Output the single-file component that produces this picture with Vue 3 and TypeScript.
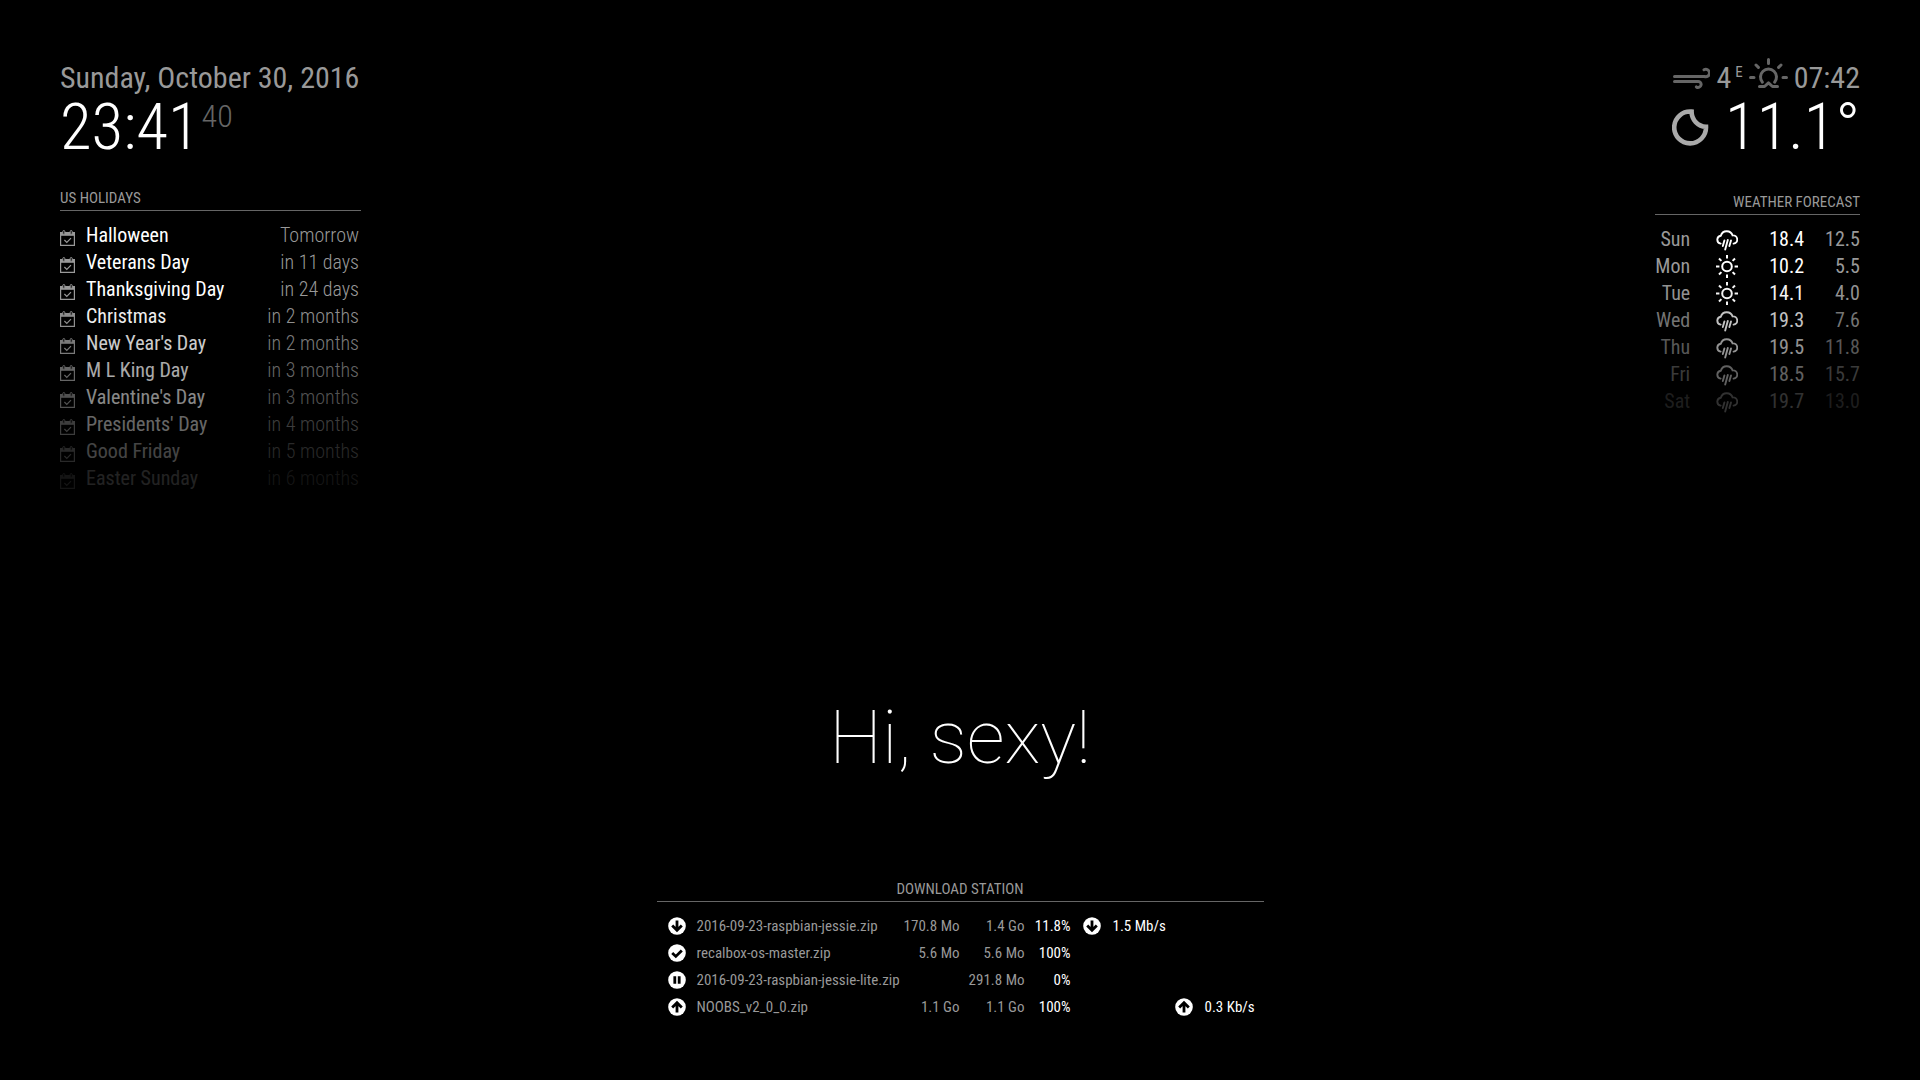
<script setup lang="ts">
interface Holiday { title: string; when: string }
interface Forecast { day: string; icon: 'rain' | 'sun'; high: string; low: string }
interface Task { name: string; status: IconName; done: string; size: string; percent: string; down?: string; up?: string }
type IconName = 'down' | 'up' | 'check' | 'pause'

const holidays: Holiday[] = [
  { title: 'Halloween', when: 'Tomorrow' },
  { title: 'Veterans Day', when: 'in 11 days' },
  { title: 'Thanksgiving Day', when: 'in 24 days' },
  { title: 'Christmas', when: 'in 2 months' },
  { title: "New Year's Day", when: 'in 2 months' },
  { title: 'M L King Day', when: 'in 3 months' },
  { title: "Valentine's Day", when: 'in 3 months' },
  { title: "Presidents' Day", when: 'in 4 months' },
  { title: 'Good Friday', when: 'in 5 months' },
  { title: 'Easter Sunday', when: 'in 6 months' },
]

const forecast: Forecast[] = [
  { day: 'Sun', icon: 'rain', high: '18.4', low: '12.5' },
  { day: 'Mon', icon: 'sun', high: '10.2', low: '5.5' },
  { day: 'Tue', icon: 'sun', high: '14.1', low: '4.0' },
  { day: 'Wed', icon: 'rain', high: '19.3', low: '7.6' },
  { day: 'Thu', icon: 'rain', high: '19.5', low: '11.8' },
  { day: 'Fri', icon: 'rain', high: '18.5', low: '15.7' },
  { day: 'Sat', icon: 'rain', high: '19.7', low: '13.0' },
]

const tasks: Task[] = [
  { name: '2016-09-23-raspbian-jessie.zip', status: 'down', done: '170.8 Mo', size: '1.4 Go', percent: '11.8%', down: '1.5 Mb/s' },
  { name: 'recalbox-os-master.zip', status: 'check', done: '5.6 Mo', size: '5.6 Mo', percent: '100%' },
  { name: '2016-09-23-raspbian-jessie-lite.zip', status: 'pause', done: '', size: '291.8 Mo', percent: '0%' },
  { name: 'NOOBS_v2_0_0.zip', status: 'up', done: '1.1 Go', size: '1.1 Go', percent: '100%', up: '0.3 Kb/s' },
]

const glyphs: Record<IconName, string> = {
  down: 'M9 3.6V13M4.2 8.4L9 13.2L13.8 8.4',
  up: 'M9 14.4V5M4.2 9.6L9 4.8L13.8 9.6',
  check: 'M4.2 9L7.8 12.4L13.8 6.4',
  pause: 'M6.8 5.2V12.8M11.2 5.2V12.8',
}

// Rows past the first quarter of a list fade out towards the bottom.
function fade(index: number, count: number): number {
  const start = count * 0.25
  return index < start ? 1 : 1 - (index - start) / (count - start)
}
</script>

<template>
  <main class="mirror">
    <div class="top">
      <div class="column left">
        <section class="module">
          <div class="medium date">Sunday, October 30, 2016</div>
          <div class="large clock">23:41<span class="seconds">40</span></div>
        </section>
        <section class="module">
          <h2 class="title">US Holidays</h2>
          <table class="list calendar">
            <tbody>
              <tr v-for="(h, i) in holidays" :key="h.title" :style="{ opacity: fade(i, holidays.length) }">
                <td class="symbol">
                  <svg width="15" height="16" viewBox="0 0 15 16" fill="none" stroke="currentColor">
                    <path d="M0.6 2.6H14.4V15.4H0.6Z" stroke-width="1.2" />
                    <path d="M0.5 2.4H14.5V5.8H0.5Z" fill="currentColor" stroke="none" />
                    <rect x="2.8" y="0.6" width="2" height="3.6" rx="0.8" fill="#000" />
                    <rect x="10.2" y="0.6" width="2" height="3.6" rx="0.8" fill="#000" />
                    <path d="M4.4 10L6.8 12.4L11 8.2" stroke-width="1.2" />
                  </svg>
                </td>
                <td class="event">{{ h.title }}</td>
                <td class="when">{{ h.when }}</td>
              </tr>
            </tbody>
          </table>
        </section>
      </div>

      <div class="column right">
        <section class="module weather">
          <div class="medium wind">
            <svg width="37" height="22" viewBox="0 0 37 22" fill="none" stroke="#666" stroke-width="3" stroke-linecap="round">
              <path d="M1.5 9.5H31.5A3.7 3.7 0 1 0 31 2.8" />
              <path d="M1.5 14.5H24.5A3 3 0 1 1 23.4 19.9" />
            </svg>
            <span class="speed">4<sup>E</sup></span>
            <svg width="39" height="31" viewBox="0 0 39 31" fill="none" stroke="#666" stroke-width="3" stroke-linecap="round">
              <path d="M19.5 1.5V5.5M7 7L9.4 9.4M32 7L29.6 9.4M1.5 19.5H5M34 19.5H37.5" />
              <path d="M13.4 24.2A8 8 0 1 1 25.6 24.2" />
              <path d="M10.5 28.5H15.5L19.5 24.8L23.5 28.5H28.5" stroke-linejoin="round" />
            </svg>
            <span>07:42</span>
          </div>
          <div class="large temp">
            <svg width="37" height="37" viewBox="0 0 37 37" fill="none" stroke="#aaa" stroke-width="4.6">
              <path d="M19.6 2.6A15.9 15.9 0 1 0 34 17.8A15 15 0 0 1 19.6 2.6Z" />
            </svg>
            <span>11.1°</span>
          </div>
        </section>
        <section class="module">
          <h2 class="title">Weather Forecast</h2>
          <table class="list forecast">
            <tbody>
              <tr v-for="(f, i) in forecast" :key="f.day" :style="{ opacity: fade(i, forecast.length) }">
                <td class="day">{{ f.day }}</td>
                <td class="sky">
                  <svg v-if="f.icon === 'sun'" width="22" height="23" viewBox="0 0 22 23" fill="none" stroke="currentColor" stroke-width="2">
                    <circle cx="11" cy="11.5" r="4.8" />
                    <path d="M11 0V3.6M11 19.4V23M0 11.5H3.4M18.6 11.5H22M3 3.5L5.4 5.9M16.6 17.1L19 19.5M19 3.5L16.6 5.9M5.4 17.1L3 19.5" />
                  </svg>
                  <svg v-else width="22" height="23" viewBox="0 0 22 23" fill="none" stroke="currentColor" stroke-width="1.9" stroke-linecap="round">
                    <path d="M4.6 15.6A4 4 0 0 1 4.8 7.7A6.2 6.2 0 0 1 16.6 7.4A4.1 4.1 0 0 1 17.6 15.6" />
                    <path d="M8.4 12.4L6.8 18M11.8 12L9.2 21.5M15 12.4L13.4 18" />
                  </svg>
                </td>
                <td class="high">{{ f.high }}</td>
                <td class="low">{{ f.low }}</td>
              </tr>
            </tbody>
          </table>
        </section>
      </div>
    </div>

    <div class="bottom">
      <p class="compliment">Hi, sexy!</p>
      <section class="downloads">
        <h2 class="title">Download Station</h2>
        <table class="list tasks">
          <tbody>
            <tr v-for="t in tasks" :key="t.name">
              <td class="state">
                <svg width="18" height="18" viewBox="0 0 18 18" fill="none" stroke="#000" stroke-width="2.8">
                  <circle cx="9" cy="9" r="8.8" fill="#fff" stroke="none" />
                  <path :d="glyphs[t.status]" />
                </svg>
              </td>
              <td class="name">{{ t.name }}</td>
              <td class="done">{{ t.done }}</td>
              <td class="size">{{ t.size }}</td>
              <td class="percent">{{ t.percent }}</td>
              <td class="rate">
                <span v-if="t.down" class="speed-rate">
                  <svg width="18" height="18" viewBox="0 0 18 18" fill="none" stroke="#000" stroke-width="2.8">
                    <circle cx="9" cy="9" r="8.8" fill="#fff" stroke="none" />
                    <path :d="glyphs.down" />
                  </svg>
                  {{ t.down }}
                </span>
              </td>
              <td class="rate">
                <span v-if="t.up" class="speed-rate">
                  <svg width="18" height="18" viewBox="0 0 18 18" fill="none" stroke="#000" stroke-width="2.8">
                    <circle cx="9" cy="9" r="8.8" fill="#fff" stroke="none" />
                    <path :d="glyphs.up" />
                  </svg>
                  {{ t.up }}
                </span>
              </td>
            </tr>
          </tbody>
        </table>
      </section>
    </div>
  </main>
</template>

<style>
body {
  background: #000;
}
</style>

<style scoped>
.mirror {
  box-sizing: border-box;
  min-height: 100vh;
  padding: 60px;
  display: flex;
  flex-direction: column;
  justify-content: space-between;
  background: #000;
  color: #999;
  font-family: "Roboto Condensed", Roboto, sans-serif;
  font-weight: 400;
  -webkit-font-smoothing: antialiased;
}

.top {
  display: flex;
  justify-content: space-between;
  align-items: flex-start;
}

.column {
  display: flex;
  flex-direction: column;
  gap: 30px;
}

.left {
  min-width: 301px;
}

.right {
  align-items: flex-end;
  text-align: right;
}

svg {
  display: block;
  flex: none;
}

.medium {
  font-size: 30px;
  line-height: 35px;
}

.large {
  font-size: 65px;
  line-height: 65px;
  font-weight: 300;
  color: #fff;
}

.clock {
  display: flex;
}

.seconds {
  margin-left: 2px;
  font-size: 32px;
  line-height: 42px;
  color: #666;
}

.weather {
  padding-bottom: 4px;
}

.wind {
  display: flex;
  justify-content: flex-end;
  align-items: flex-end;
  gap: 6px;
  height: 35px;
}

.wind svg {
  margin-bottom: 6px;
}

.speed {
  display: flex;
}

.speed sup {
  margin-left: 4px;
  font-size: 15px;
  line-height: 25px;
}

.temp {
  display: flex;
  justify-content: flex-end;
  align-items: center;
  gap: 16px;
}

.title {
  margin: 0 0 10px;
  padding: 1px 0 4px;
  border-bottom: 1px solid #666;
  font-size: 15px;
  line-height: 15px;
  font-weight: 400;
  text-transform: uppercase;
}

.list td {
  box-sizing: border-box;
  padding: 0;
  white-space: nowrap;
}

.calendar,
.forecast {
  border-spacing: 0 2px;
  font-size: 20px;
  line-height: 25px;
}

.calendar td,
.forecast td {
  height: 25px;
}

.calendar {
  width: 100%;
}

.calendar .symbol {
  width: 26px;
  padding-top: 4px;
}

.event {
  color: #fff;
}

.calendar .when {
  padding-right: 2px;
  text-align: right;
  font-weight: 300;
}

.sky {
  color: #fff;
}

.forecast .sky {
  padding-left: 26px;
}

.forecast .high {
  padding-left: 31px;
  color: #fff;
}

.forecast .low {
  padding-left: 21px;
}

.bottom {
  display: flex;
  flex-direction: column;
  align-items: center;
}

.compliment {
  margin: 0 0 106px;
  font-family: Roboto, sans-serif;
  font-size: 75px;
  line-height: 75px;
  font-weight: 100;
  color: #fff;
}

.downloads {
  text-align: center;
}

.tasks {
  table-layout: fixed;
  width: 587px;
  margin: 0 9px 0 11px;
  border-collapse: collapse;
  font-size: 15px;
  line-height: 20px;
  text-align: right;
}

.tasks td {
  height: 27px;
}

.tasks .state {
  width: 29px;
}

.tasks .name {
  width: 206px;
  text-align: left;
}

.tasks .done {
  width: 57px;
}

.tasks .size {
  width: 65px;
}

.tasks .percent {
  width: 46px;
}

.tasks .rate {
  width: 92px;
  padding-left: 12px;
}

.tasks .percent,
.tasks .rate {
  color: #fff;
}

.speed-rate {
  display: flex;
  align-items: center;
  gap: 12px;
}
</style>
